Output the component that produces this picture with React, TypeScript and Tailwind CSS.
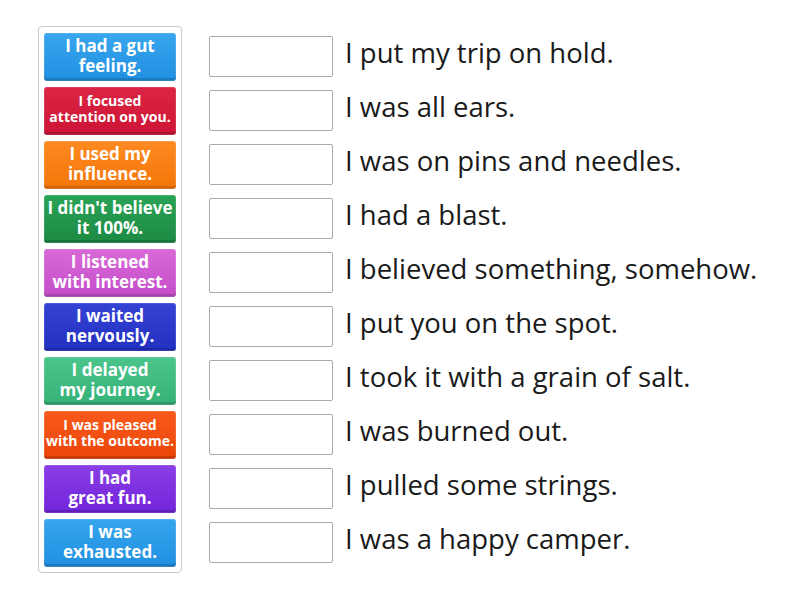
import React from "react";

const cards: { t: string[]; bg: string; small?: boolean }[] = [
  { t: ["I had a gut", "feeling."], bg: "bg-[linear-gradient(#3aa6ee,#1f8fe0)]" },
  { t: ["I focused", "attention on you."], bg: "bg-[linear-gradient(#dc2444,#cc1534)]", small: true },
  { t: ["I used my", "influence."], bg: "bg-[linear-gradient(#fd8a22,#f47608)]" },
  { t: ["I didn't believe", "it 100%."], bg: "bg-[linear-gradient(#2aa356,#1c8a43)]" },
  { t: ["I listened", "with interest."], bg: "bg-[linear-gradient(#d86ad8,#c54dc9)]" },
  { t: ["I waited", "nervously."], bg: "bg-[linear-gradient(#3443d4,#2230c2)]" },
  { t: ["I delayed", "my journey."], bg: "bg-[linear-gradient(#4cc58c,#35b277)]" },
  { t: ["I was pleased", "with the outcome."], bg: "bg-[linear-gradient(#f85a1c,#ec4508)]", small: true },
  { t: ["I had", "great fun."], bg: "bg-[linear-gradient(#8a3fe6,#7224da)]" },
  { t: ["I was", "exhausted."], bg: "bg-[linear-gradient(#38a6ee,#1f8fe0)]" },
];

const rows = [
  "I put my trip on hold.",
  "I was all ears.",
  "I was on pins and needles.",
  "I had a blast.",
  "I believed something, somehow.",
  "I put you on the spot.",
  "I took it with a grain of salt.",
  "I was burned out.",
  "I pulled some strings.",
  "I was a happy camper.",
];

export default function App() {
  return (
    <div
      className="w-[800px] h-[600px] bg-white flex items-start"
      style={{ fontFamily: '"Open Sans", sans-serif' }}
    >
      <div className="ml-[38px] mt-[26px] w-[144px] h-[547px] border border-[#c8c8c8] rounded-[4px] flex flex-col gap-[6px] pl-[5px] pt-[6px]">
        {cards.map((c, i) => (
          <div
            key={i}
            className={`w-[132px] h-[48px] rounded-[3px] ${c.bg} shadow-[inset_0_-3px_0_rgba(0,0,0,0.15),inset_0_0_0_1px_rgba(255,255,255,0.12)] flex flex-col items-center justify-center text-white font-bold text-center`}
          >
            <div className={c.small ? "-mt-[5px]" : "-mt-[3px]"}>
              {c.t.map((l, j) => (
                <div
                  key={j}
                  className={c.small ? "text-[14px] leading-[16px] whitespace-nowrap" : "text-[17px] leading-[20px] whitespace-nowrap"}
                >
                  {l}
                </div>
              ))}
            </div>
          </div>
        ))}
      </div>
      <div className="ml-[27px] mt-[36px] flex flex-col gap-[13px]">
        {rows.map((r, i) => (
          <div key={i} className="flex items-center h-[41px]">
            <div className="w-[124px] h-[41px] border border-[#aaaaaa] rounded-[2px] bg-white" />
            <div className="ml-[12px] -mt-[8px] text-[27.5px] text-[#1a1a1a] leading-none whitespace-nowrap">
              {r}
            </div>
          </div>
        ))}
      </div>
    </div>
  );
}
